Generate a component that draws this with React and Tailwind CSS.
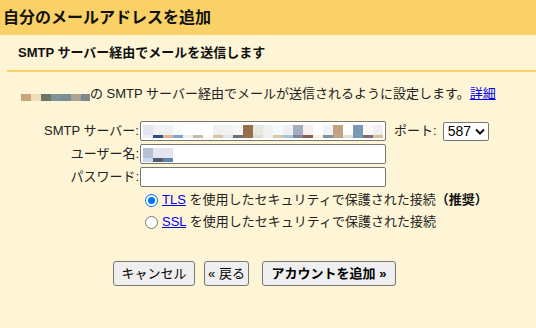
const smtpBlocks = [
  ['bg-[#e3e6ee]', 'bg-[#eef0f4]'],
  ['bg-[#f0f1f6]', 'bg-[#2e4d87]'],
  ['bg-[#eef0f2]', 'bg-[#e4b58d]'],
  ['bg-[#f7fdfd]', 'bg-[#7ca5cf]'],
  ['bg-white', 'bg-[#eeeeee]'],
  ['bg-white', 'bg-[#c6bca7]'],
  ['bg-white', 'bg-white'],
  ['bg-[#f0f0f0]', 'bg-[#d9c1a2]'],
  ['bg-[#f2f2f2]', 'bg-[#dde7ee]'],
  ['bg-[#f7f7f7]', 'bg-[#6d6f7a]'],
  ['bg-[#96704a]', 'bg-[#96704a]'],
  ['bg-[#e8e8e2]', 'bg-[#dcdcd0]'],
  ['bg-[#f0f0f0]', 'bg-[#f0f0f0]'],
  ['bg-[#f5fbfb]', 'bg-[#d8c7a2]'],
  ['bg-[#eef0f2]', 'bg-[#a7c3d8]'],
  ['bg-[#a4aec0]', 'bg-[#7d8595]'],
  ['bg-[#f6f1ee]', 'bg-[#8b5f4f]'],
  ['bg-white', 'bg-[#f8efe5]'],
  ['bg-[#f3f4f7]', 'bg-[#7e92a6]'],
  ['bg-[#c3a282]', 'bg-[#c1a282]'],
  ['bg-white', 'bg-[#dcdfd8]'],
  ['bg-[#7a98b4]', 'bg-[#7a98b4]'],
  ['bg-[#fbf8f5]', 'bg-[#7d6a73]'],
  ['bg-[#f0f0f4]', 'bg-[#d4c298]'],
];

const userBlocks = [
  ['bg-[#b6c0d3]', 'bg-[#c9d9ec]'],
  ['bg-[#e3e6ee]', 'bg-[#4e5c70]'],
  ['bg-[#e3e6ee]', 'bg-[#5f82b0]'],
];

const nameBlocks = [
  'bg-[#c6a67a]',
  'bg-[#f0dcb5]',
  'bg-[#6f7464]',
  'bg-[#7b9399]',
  'bg-[#778e96]',
  'bg-[#aba394]',
  'bg-[#7b8a8a]',
];

function Blurred({ blocks, bottom = 'h-[3px]' }) {
  return (
    <div className="flex pl-[2px] pt-[3px]">
      {blocks.map(([top, bot], i) => (
        <div key={i} className="flex w-[10px] flex-col">
          <div className={`h-[10px] ${top}`} />
          <div className={`${bottom} ${bot}`} />
        </div>
      ))}
    </div>
  );
}

function Field({ label, children }) {
  return (
    <div className="flex h-[20px] items-center">
      <span className="w-[139px] text-right">{label}</span>
      <div className="ml-[1px] h-[20px] w-[246px] overflow-hidden rounded-[2px] border border-[#767676] bg-white">
        {children}
      </div>
    </div>
  );
}

function Radio({ checked }) {
  return checked ? (
    <span className="flex h-[13px] w-[13px] items-center justify-center rounded-full bg-[#0075ff]">
      <span className="flex h-[11px] w-[11px] items-center justify-center rounded-full bg-white">
        <span className="h-[7px] w-[7px] rounded-full bg-[#0075ff]" />
      </span>
    </span>
  ) : (
    <span className="h-[13px] w-[13px] rounded-full border border-[#767676] bg-white" />
  );
}

export default function App() {
  return (
    <div
      className="min-h-[328px] bg-[#fef5d6] text-[13px] text-[#222]"
      style={{ fontFamily: '"Liberation Sans", "Noto Sans CJK JP", sans-serif' }}
    >
      <div className="flex h-[35px] items-center bg-[#f9d166] pl-[3px] text-[16px] font-bold text-[#111]">
        自分のメールアドレスを追加
      </div>

      <div className="ml-[7px] flex h-[37px] items-center border-b-2 border-[#f9d166] pl-[11px] font-bold text-[#111]">
        SMTP サーバー経由でメールを送信します
      </div>

      <div className="mt-[13px] flex h-[16px] items-end pl-[21px] leading-[16px]">
        <div className="mb-0 flex h-[7px]">
          {nameBlocks.map((c, i) => (
            <div key={i} className={`h-[7px] ${i === 6 ? 'w-[9px]' : 'w-[10px]'} ${c}`} />
          ))}
        </div>
        <span className="-mb-[1px]">
          の SMTP サーバー経由でメールが送信されるように設定します。
          <a className="text-[#0000ee] underline">詳細</a>
        </span>
      </div>

      <div className="mt-[20px] flex flex-col gap-[3px]">
        <div className="flex items-center">
          <Field label="SMTP サーバー:">
            <Blurred blocks={smtpBlocks} bottom="h-[3px]" />
          </Field>
          <span className="ml-[8px]">ポート:</span>
          <div className="ml-[6px] flex h-[19px] w-[46px] items-center justify-between rounded-[2px] border border-[#767676] bg-white pl-[4px] pr-[3px] text-[14px] text-black">
            <span>587</span>
            <svg width="10" height="7" viewBox="0 0 10 7">
              <path d="M1 1.5 L5 5.5 L9 1.5" fill="none" stroke="#111" strokeWidth="2" />
            </svg>
          </div>
        </div>
        <Field label="ユーザー名:">
          <Blurred blocks={userBlocks} bottom="h-[4px]" />
        </Field>
        <Field label="パスワード:" />
      </div>

      <div className="mt-[4px] flex flex-col gap-[4px] pl-[145px]">
        <div className="flex h-[18px] items-center gap-[4px]">
          <Radio checked />
          <span>
            <a className="text-[#0000ee] underline">TLS</a> を使用したセキュリティで保護された接続
            <span className="font-bold text-[#111]">（推奨）</span>
          </span>
        </div>
        <div className="flex h-[18px] items-center gap-[4px]">
          <Radio />
          <span>
            <a className="text-[#0000ee] underline">SSL</a> を使用したセキュリティで保護された接続
          </span>
        </div>
      </div>

      <div className="mt-[30px] flex pl-[113px] text-black">
        <button className="h-[25px] w-[82px] rounded-[3px] border border-[#767676] bg-[#efefef]">
          キャンセル
        </button>
        <button className="ml-[9px] h-[25px] w-[45px] rounded-[3px] border border-[#767676] bg-[#efefef]">
          « 戻る
        </button>
        <button className="ml-[13px] h-[25px] w-[134px] rounded-[3px] border border-[#767676] bg-[#efefef] font-bold">
          アカウントを追加 »
        </button>
      </div>
    </div>
  );
}
